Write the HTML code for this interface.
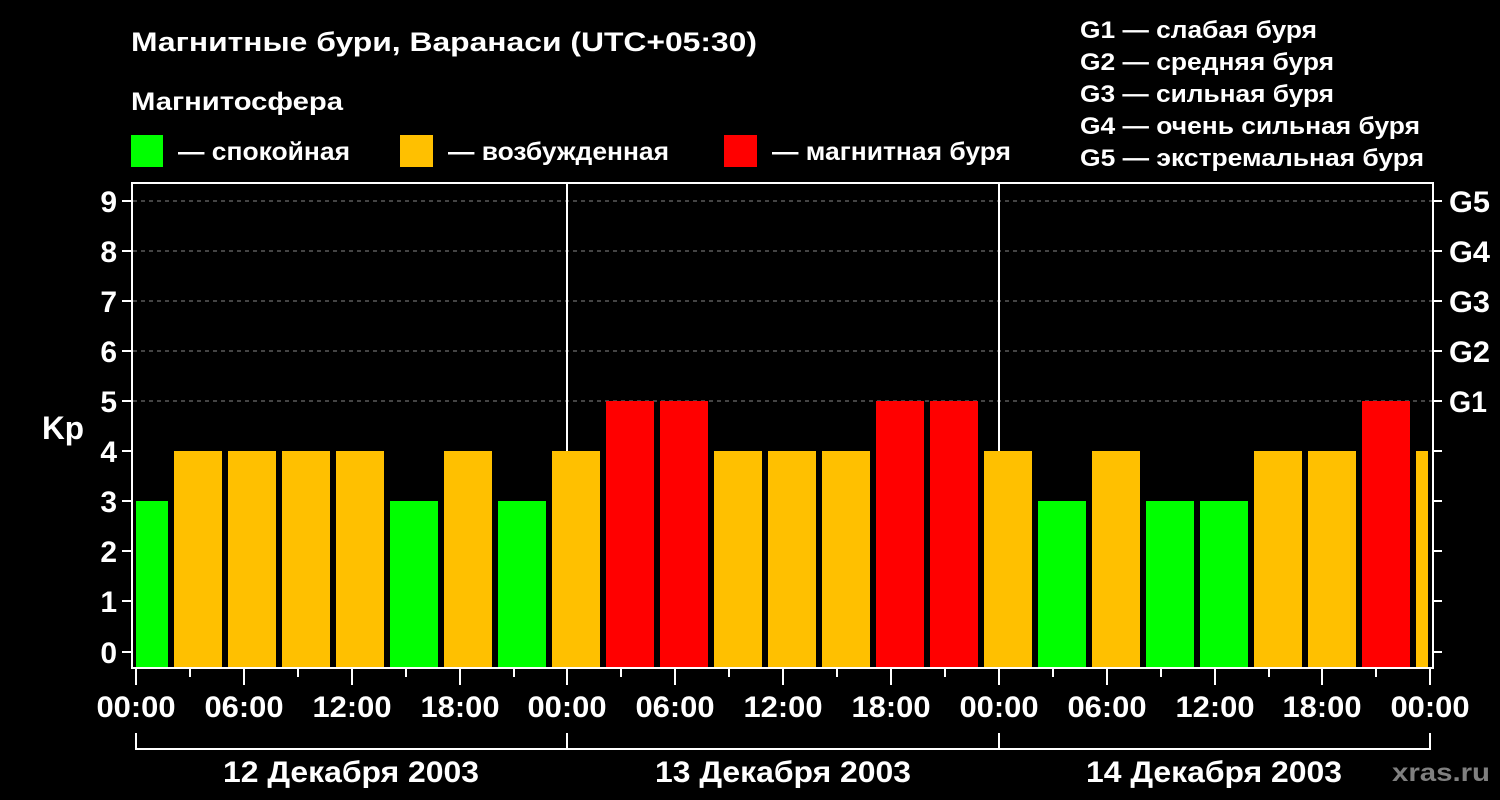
<!DOCTYPE html>
<html><head><meta charset="utf-8"><style>
html,body{margin:0;padding:0;background:#000;width:1500px;height:800px;overflow:hidden}
svg{display:block}
text{font-family:"Liberation Sans",Arial,sans-serif;font-weight:bold;fill:#fff}
</style></head><body>
<svg width="1500" height="800" viewBox="0 0 1500 800">
<rect width="1500" height="800" fill="#000"/>
<text x="131" y="51" font-size="27" textLength="626" lengthAdjust="spacingAndGlyphs">Магнитные бури, Варанаси (UTC+05:30)</text>
<text x="131" y="110" font-size="25" textLength="212" lengthAdjust="spacingAndGlyphs">Магнитосфера</text>
<rect x="131" y="135" width="32" height="32" fill="#00ff00"/>
<text x="178" y="160" font-size="25" textLength="172" lengthAdjust="spacingAndGlyphs">— спокойная</text>
<rect x="400" y="135" width="33" height="32" fill="#ffc000"/>
<text x="448" y="160" font-size="25" textLength="221" lengthAdjust="spacingAndGlyphs">— возбужденная</text>
<rect x="724" y="135" width="33" height="32" fill="#ff0000"/>
<text x="772" y="160" font-size="25" textLength="239" lengthAdjust="spacingAndGlyphs">— магнитная буря</text>
<g font-size="24">
<text x="1080" y="38" textLength="237" lengthAdjust="spacingAndGlyphs">G1 — слабая буря</text>
<text x="1080" y="70" textLength="254" lengthAdjust="spacingAndGlyphs">G2 — средняя буря</text>
<text x="1080" y="102" textLength="254" lengthAdjust="spacingAndGlyphs">G3 — сильная буря</text>
<text x="1080" y="134" textLength="340" lengthAdjust="spacingAndGlyphs">G4 — очень сильная буря</text>
<text x="1080" y="166" textLength="344" lengthAdjust="spacingAndGlyphs">G5 — экстремальная буря</text>
</g>
<g stroke="#888" stroke-width="1" stroke-dasharray="4,4">
<line x1="133" y1="201" x2="1432" y2="201"/>
<line x1="133" y1="251" x2="1432" y2="251"/>
<line x1="133" y1="301" x2="1432" y2="301"/>
<line x1="133" y1="351" x2="1432" y2="351"/>
<line x1="133" y1="401" x2="1432" y2="401"/>
</g>
<g stroke="#fff" stroke-width="2">
<line x1="567" y1="183" x2="567" y2="668"/>
<line x1="999" y1="183" x2="999" y2="668"/>
</g>
<g>
<rect x="136" y="501" width="32" height="167" fill="#00ff00"/>
<rect x="174" y="451" width="48" height="217" fill="#ffc000"/>
<rect x="228" y="451" width="48" height="217" fill="#ffc000"/>
<rect x="282" y="451" width="48" height="217" fill="#ffc000"/>
<rect x="336" y="451" width="48" height="217" fill="#ffc000"/>
<rect x="390" y="501" width="48" height="167" fill="#00ff00"/>
<rect x="444" y="451" width="48" height="217" fill="#ffc000"/>
<rect x="498" y="501" width="48" height="167" fill="#00ff00"/>
<rect x="552" y="451" width="48" height="217" fill="#ffc000"/>
<rect x="606" y="401" width="48" height="267" fill="#ff0000"/>
<rect x="660" y="401" width="48" height="267" fill="#ff0000"/>
<rect x="714" y="451" width="48" height="217" fill="#ffc000"/>
<rect x="768" y="451" width="48" height="217" fill="#ffc000"/>
<rect x="822" y="451" width="48" height="217" fill="#ffc000"/>
<rect x="876" y="401" width="48" height="267" fill="#ff0000"/>
<rect x="930" y="401" width="48" height="267" fill="#ff0000"/>
<rect x="984" y="451" width="48" height="217" fill="#ffc000"/>
<rect x="1038" y="501" width="48" height="167" fill="#00ff00"/>
<rect x="1092" y="451" width="48" height="217" fill="#ffc000"/>
<rect x="1146" y="501" width="48" height="167" fill="#00ff00"/>
<rect x="1200" y="501" width="48" height="167" fill="#00ff00"/>
<rect x="1254" y="451" width="48" height="217" fill="#ffc000"/>
<rect x="1308" y="451" width="48" height="217" fill="#ffc000"/>
<rect x="1362" y="401" width="48" height="267" fill="#ff0000"/>
<rect x="1416" y="451" width="12" height="217" fill="#ffc000"/>
</g>
<rect x="132" y="183" width="1301" height="485" fill="none" stroke="#fff" stroke-width="2"/>
<g stroke="#fff" stroke-width="2">
<path d="M122 201H131M122 251H131M122 301H131M122 351H131M122 401H131M122 451H131M122 501H131M122 551H131M122 601H131M122 652H131"/>
<path d="M1434 201H1442M1434 251H1442M1434 301H1442M1434 351H1442M1434 401H1442M1434 451H1442M1434 501H1442M1434 551H1442M1434 601H1442M1434 652H1442"/>
<path d="M136 669V685M190 669V677M244 669V685M298 669V677M352 669V685M406 669V677M460 669V685M514 669V677M567 669V685M621 669V677M675 669V685M729 669V677M783 669V685M837 669V677M891 669V685M945 669V677M999 669V685M1053 669V677M1107 669V685M1161 669V677M1215 669V685M1269 669V677M1322 669V685M1376 669V677M1430 669V685"/>
<path d="M136 733V750M136 749H1430M567 733V750M999 733V750M1430 733V750"/>
</g>
<g font-size="30" text-anchor="end">
<text x="117" y="212">9</text><text x="117" y="262">8</text><text x="117" y="312">7</text><text x="117" y="362">6</text><text x="117" y="412">5</text><text x="117" y="462">4</text><text x="117" y="512">3</text><text x="117" y="562">2</text><text x="117" y="612">1</text><text x="117" y="663">0</text>
</g>
<text x="42" y="439" font-size="32" textLength="42" lengthAdjust="spacingAndGlyphs">Kp</text>
<g font-size="30">
<text x="1449" y="212" textLength="41" lengthAdjust="spacingAndGlyphs">G5</text><text x="1449" y="262" textLength="41" lengthAdjust="spacingAndGlyphs">G4</text><text x="1449" y="312" textLength="41" lengthAdjust="spacingAndGlyphs">G3</text><text x="1449" y="362" textLength="41" lengthAdjust="spacingAndGlyphs">G2</text><text x="1449" y="412" textLength="38" lengthAdjust="spacingAndGlyphs">G1</text>
</g>
<g font-size="30" text-anchor="middle">
<text x="136" y="717" textLength="79" lengthAdjust="spacingAndGlyphs">00:00</text><text x="244" y="717" textLength="79" lengthAdjust="spacingAndGlyphs">06:00</text><text x="352" y="717" textLength="79" lengthAdjust="spacingAndGlyphs">12:00</text><text x="460" y="717" textLength="79" lengthAdjust="spacingAndGlyphs">18:00</text>
<text x="567" y="717" textLength="79" lengthAdjust="spacingAndGlyphs">00:00</text><text x="675" y="717" textLength="79" lengthAdjust="spacingAndGlyphs">06:00</text><text x="783" y="717" textLength="79" lengthAdjust="spacingAndGlyphs">12:00</text><text x="891" y="717" textLength="79" lengthAdjust="spacingAndGlyphs">18:00</text>
<text x="999" y="717" textLength="79" lengthAdjust="spacingAndGlyphs">00:00</text><text x="1107" y="717" textLength="79" lengthAdjust="spacingAndGlyphs">06:00</text><text x="1215" y="717" textLength="79" lengthAdjust="spacingAndGlyphs">12:00</text><text x="1322" y="717" textLength="79" lengthAdjust="spacingAndGlyphs">18:00</text>
<text x="1430" y="717" textLength="79" lengthAdjust="spacingAndGlyphs">00:00</text>
<text x="351" y="782" textLength="256" lengthAdjust="spacingAndGlyphs">12 Декабря 2003</text>
<text x="783" y="782" textLength="256" lengthAdjust="spacingAndGlyphs">13 Декабря 2003</text>
<text x="1214" y="782" textLength="256" lengthAdjust="spacingAndGlyphs">14 Декабря 2003</text>
</g>
<text x="1392" y="781" font-size="25" style="fill:#808080" textLength="98" lengthAdjust="spacingAndGlyphs">xras.ru</text>
</svg>
</body></html>
